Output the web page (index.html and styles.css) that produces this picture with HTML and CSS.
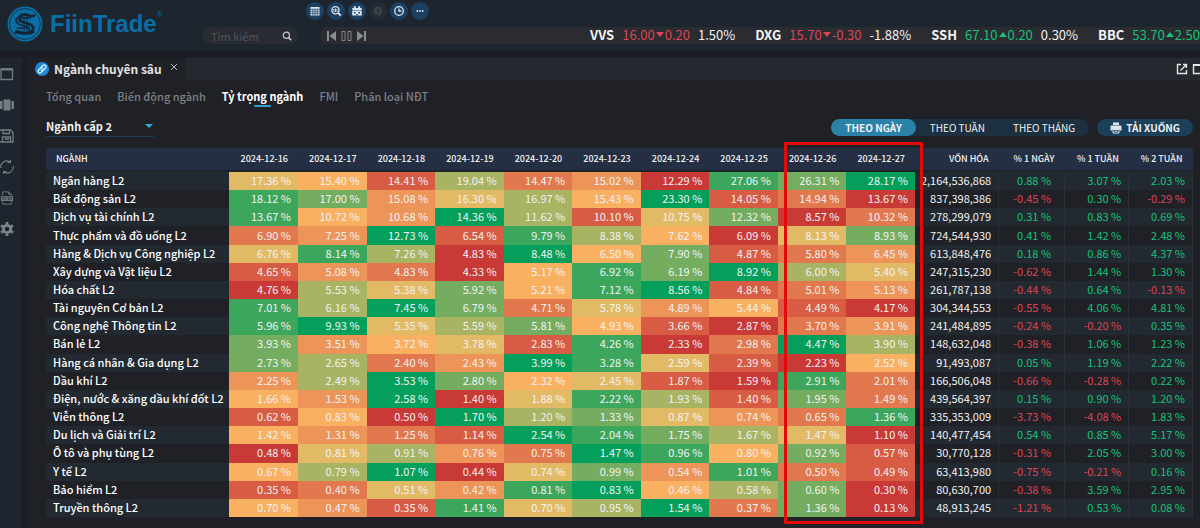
FILE: index.html
```
<!DOCTYPE html>
<html lang="vi">
<head>
<meta charset="utf-8">
<title>FiinTrade</title>
<link rel="stylesheet" href="styles.css">
</head>
<body>
<header class="topbar">
  <div class="brand">
    <svg class="brand-mark" viewBox="0 0 36 36" aria-hidden="true">
      <circle cx="18" cy="18" r="17.5" fill="#0a6fa6"/>
      <circle cx="18" cy="18" r="15.4" fill="none" stroke="#1b3347" stroke-width="1"/>
      <g fill="none" stroke="#152536" stroke-linecap="round">
        <path d="M27 9.500c-3 2.500-5-1-9-1-5 0-8 4-4.500 6.500 4 2.500 11 2 12.500 6 1.500 5-7 8-17 5" stroke-width="2.800"/>
        <path d="M9.500 12c-2 4 2 7 7 7.500s7 2 5 4.500M14 12h9M10 22h10M8 27c3-4 6-1 8 0s7 2 11-1" stroke-width="1.600"/>
        <path d="M17 9v17M20 9v16" stroke-width=".8"/>
      </g>
    </svg>
    <span class="brand-name">FiinTrade</span><span class="brand-reg">®</span>
  </div>
  <div class="top-tools">
    <nav class="quick" aria-label="Công cụ">
      <button aria-label="Bảng"><svg viewBox="0 0 18 18"><path fill="#dbe8f2" d="M4.500 5h9v8.500h-9z"/><path d="M4.500 7.200h9M4.500 9.300h9M4.500 11.400h9M6.800 7v6.500M9 7v6.500M11.300 7v6.500" stroke="#1c4160" stroke-width=".7"/></svg></button>
      <button aria-label="Tra cứu"><svg viewBox="0 0 18 18" fill="none" stroke="#dbe8f2"><circle cx="8.500" cy="8.300" r="3.600" stroke-width="1.300"/><path d="m11.200 11 2.500 2.600" stroke-width="1.800"/><path d="M7 7v3M8.500 6.500V10M10 7V10" stroke-width=".9"/></svg></button>
      <button aria-label="Lịch"><svg viewBox="0 0 18 18"><path fill="#dbe8f2" d="M4.300 6h9.400v2.500H4.300zM4.300 9h9.400v4.500H4.300zM5.800 4.300h2V6h-2zM10.200 4.300h2V6h-2z"/><path fill="#1c4160" d="M6 10h1.600v1.600H6zM10.300 10H12v1.600h-1.700zM8.300 12h1.400v1.500H8.300z"/></svg></button>
      <button class="off" aria-label="Cảnh báo"><svg viewBox="0 0 18 18"><circle cx="9" cy="9" r="4.500" fill="#3a3f48"/><path d="M9 6.500v5" stroke="#252b34"/></svg></button>
      <button aria-label="Thời gian"><svg viewBox="0 0 18 18" fill="none" stroke="#dbe8f2" stroke-width="1.300"><circle cx="9" cy="9" r="4.300"/><path d="M9 6.500V9h2.300"/></svg></button>
      <button aria-label="Thêm"><svg viewBox="0 0 18 18" fill="#dbe8f2"><circle cx="6.300" cy="9" r=".9"/><circle cx="9" cy="9" r=".9"/><circle cx="11.700" cy="9" r=".9"/></svg></button>
    </nav>
    <div class="market">
      <label class="search">
        <input type="text" placeholder="Tìm kiếm" aria-label="Tìm kiếm">
        <svg viewBox="0 0 10 10" fill="none" stroke="#c9ccd0"><circle cx="4.300" cy="4.300" r="3.100" stroke-width="1.200"/><path d="m6.600 6.600 2.500 2.500" stroke-width="1.500"/></svg>
      </label>
      <div class="ticker">
        <div class="player">
          <button aria-label="Trước"><svg viewBox="0 0 11 12"><path fill="#8a8d92" d="M1 1h2v10H1zM10 1v10L3.500 6z"/></svg></button>
          <button aria-label="Dừng"><svg viewBox="0 0 11 12"><path fill="none" stroke="#8a8d92" stroke-width=".9" d="M1 1.500h3v9H1zM7 1.500h3v9H7z"/></svg></button>
          <button aria-label="Sau"><svg viewBox="0 0 11 12"><path fill="#8a8d92" d="M8 1h2v10H8zM1 1v10l6.500-5z"/></svg></button>
        </div>
        <div class="quotes">
          <div class="quote"><b>VVS</b><span class="down">16.00<i></i>0.20</span><span>1.50%</span></div>
          <div class="quote"><b>DXG</b><span class="down">15.70<i></i>-0.30</span><span>-1.88%</span></div>
          <div class="quote"><b>SSH</b><span class="up">67.10<i></i>0.20</span><span>0.30%</span></div>
          <div class="quote"><b>BBC</b><span class="up">53.70<i></i>2.50</span></div>
        </div>
      </div>
    </div>
  </div>
</header>
<div class="workspace">
  <aside class="rail">
    <button aria-label="Cửa sổ"><svg viewBox="0 0 14 14"><path fill="none" stroke="#777c83" stroke-width="1.300" d="M1 2h11.500v10.500H1z"/><path stroke="#777c83" stroke-width="2" d="M1 2.500h11.500"/></svg></button>
    <button aria-label="Bố cục"><svg viewBox="0 0 14 14" fill="#777c83"><path d="M3.500 1.500h7v11h-7zM0 3h2.500v8H0zM11.500 3H14v8h-2.500z"/></svg></button>
    <button aria-label="Lưu"><svg viewBox="0 0 14 14" fill="none" stroke="#777c83" stroke-width="1.300"><path d="M-1 1h11.500L13 3.500V13H-1M3 1v3.500h6.500V1M2.500 13V8h8v5M5 10h4"/></svg></button>
    <button aria-label="Làm mới"><svg viewBox="0 0 14 14" fill="none" stroke="#777c83" stroke-width="1.100"><path d="M.8 8A6 6 0 0 1 10 2M13.200 6A6 6 0 0 1 4 12M7.500 2.500H10.500V0M6.500 11.500H3.500V14"/></svg></button>
    <button aria-label="Xuất XLSX"><svg viewBox="0 0 14 16"><path fill="none" stroke="#777c83" d="M2 5V1h7l3 3v2M2 12v3h10v-3M9 1v3h3"/><path fill="#777c83" d="M0 6h14v5.500H0z"/><path fill="none" stroke="#252b34" stroke-width=".8" d="m1.500 7 2 3M3.500 7l-2 3M5 7v3h1.500M9.500 7.200H8v1.500h1.500V10H8M11 7l1.500 3M12.500 7 11 10"/></svg></button>
    <button aria-label="Cài đặt"><svg viewBox="0 0 14 14"><circle cx="7" cy="7" r="3.700" fill="none" stroke="#7f848b" stroke-width="2.800"/><path stroke="#7f848b" stroke-width="2.700" d="M7 0v2.500M7 11.500V14M1 3.500l2.200 1.300M10.800 9.200 13 10.500M1 10.500l2.200-1.300M10.800 4.800 13 3.500"/></svg></button>
  </aside>
  <main class="panel">
    <div class="window-bar">
      <div class="window-tab">
        <svg class="link-icon" viewBox="0 0 14 14"><circle cx="7" cy="7" r="7" fill="#1d87dc"/><g fill="none" stroke="#e8f4ff" stroke-width="1.200" stroke-linecap="round"><path d="m6 5.400 1.900-1.900a1.600 1.600 0 0 1 2.600 2.500L8.500 8a1.500 1.500 0 0 1-2.300-.2"/><path d="M8 8.600 6.100 10.500A1.600 1.600 0 0 1 3.500 8l2-2a1.500 1.500 0 0 1 2.300.2"/></g></svg>
        <h1>Ngành chuyên sâu</h1>
        <button class="close" aria-label="Đóng"><svg viewBox="0 0 8 8"><path d="m1 1 6 6M7 1 1 7" stroke="#c8cacd" stroke-width=".9"/></svg></button>
      </div>
      <div class="window-actions">
        <button aria-label="Mở rộng"><svg viewBox="0 0 12 12" fill="none" stroke="#e5e5e6" stroke-width="1.400"><path d="M5 1.500H1.500v9h9V7M4.500 7.500 10 2M7 1.500h3.500V5"/></svg></button>
        <button aria-label="Phóng to"><svg viewBox="0 0 12 12" fill="none" stroke="#e5e5e6"><path stroke-width="1.400" d="M1.500 2h9v8.500h-9z"/><path stroke-width="2" d="M1 2h10"/></svg></button>
      </div>
    </div>
    <nav class="tabs">
      <a href="#">Tổng quan</a>
      <a href="#">Biến động ngành</a>
      <a href="#" class="current">Tỷ trọng ngành</a>
      <a href="#">FMI</a>
      <a href="#">Phân loại NĐT</a>
    </nav>
    <div class="controls">
      <div class="level"><select aria-label="Cấp ngành"><option>Ngành cấp 2</option></select></div>
      <div class="actions">
        <div class="period">
          <button class="on">THEO NGÀY</button><button>THEO TUẦN</button><button>THEO THÁNG</button>
        </div>
        <button class="download"><svg viewBox="0 0 12 12"><path fill="#dce6ee" d="M3 .5h6V3H3zM1.500 3.500h9a1 1 0 0 1 1 1v4H9.500V7h-7v1.500H.5v-4a1 1 0 0 1 1-1z"/><path fill="none" stroke="#dce6ee" d="M3 7.500h6v3.500H3zM4.500 9.200h3"/></svg>TẢI XUỐNG</button>
      </div>
    </div>
    <div class="sheet">
      <table>
        <colgroup>
          <col class="c-name"><col class="c-day" span="10"><col class="c-cap"><col class="c-d1"><col class="c-w1"><col class="c-w2">
        </colgroup>
        <thead><tr>
          <th class="name">NGÀNH</th>
          <th>2024-12-16</th><th>2024-12-17</th><th>2024-12-18</th><th>2024-12-19</th><th>2024-12-20</th>
          <th>2024-12-23</th><th>2024-12-24</th><th>2024-12-25</th><th>2024-12-26</th><th>2024-12-27</th>
          <th>VỐN HÓA</th><th>% 1 NGÀY</th><th>% 1 TUẦN</th><th>% 2 TUẦN</th>
        </tr></thead>
        <tbody id="rows"></tbody>
      </table>
      <div class="highlight"></div>
    </div>
  </main>
</div>
<script src="script.js"></script>
</body>
</html>
```
FILE: styles.css
```
* { box-sizing: border-box; }
body {
  margin: 0;
  min-height: 100vh;
  display: flex;
  flex-direction: column;
  background: #1a1d25;
  color: #f2f2f3;
  font: 11px/16px "Noto Sans CJK SC", "Noto Sans", sans-serif;
}
button, input, select { font: inherit; color: inherit; border: 0; padding: 0; background: none; }
svg { display: block; }

.topbar {
  display: flex;
  height: 51px;
  flex: none;
  background: #1d252f;
}
.brand {
  display: flex;
  align-items: center;
  width: 202px;
  flex: none;
  padding: 0 0 3px 7px;
  color: #0a6fa6;
  font-family: "Liberation Sans", sans-serif;
}
.brand-mark { width: 36px; height: 36px; }
.brand-name { margin-left: 7px; font-size: 24px; font-weight: 700; line-height: 30px; }
.brand-reg { align-self: flex-start; padding-top: 8px; font-size: 8px; line-height: 14px; }
.top-tools { flex: 1; min-width: 0; display: flex; flex-direction: column; gap: 7px; padding-top: 2px; }
.quick { display: flex; gap: 3px; padding-left: 104px; }
.quick button { width: 18px; height: 18px; border-radius: 50%; background: #1c4160; }
.quick .off { background: #252b34; }
.market { display: flex; gap: 22px; }
.search {
  display: flex;
  align-items: center;
  width: 96px;
  height: 17px;
  padding: 0 6px 0 9px;
  border-radius: 9px;
  background: #282b32;
}
.search input { flex: 1; min-width: 0; outline: 0; }
.search input::placeholder { color: #50545b; opacity: 1; }
.search svg { width: 10px; height: 10px; }
.ticker {
  flex: 1;
  min-width: 0;
  display: flex;
  align-items: center;
  height: 17px;
  padding-left: 6px;
  border-radius: 9px 0 0 9px;
  background: #2a2c32;
}
.player { display: flex; gap: 4px; width: 264px; flex: none; }
.player svg { width: 11px; height: 12px; }
.quotes { display: flex; gap: 20px; padding-bottom: 2px; font-size: 13px; white-space: nowrap; }
.quote { display: flex; gap: 8px; }
.quote i { display: inline-block; margin: 0 1px 3px; border: 4px solid transparent; }
.down { color: #dc4654; }
.up { color: #16c278; }
.down i { border-top: 5px solid; border-bottom: 0; }
.up i { border-bottom: 5px solid; border-top: 0; }

.workspace { flex: 1; display: flex; gap: 6px; padding-top: 7px; }
.rail {
  display: flex;
  flex-direction: column;
  gap: 17px;
  width: 22px;
  flex: none;
  padding-top: 9px;
  background: #1e252e;
}
.rail svg { width: 14px; height: 14px; }
.panel {
  flex: 1;
  min-width: 0;
  display: flex;
  flex-direction: column;
  background: #1f2127;
}
.window-bar { display: flex; justify-content: space-between; height: 22px; background: #26282f; overflow: hidden; }
.window-tab {
  display: flex;
  align-items: center;
  width: 157px;
  padding-left: 7px;
  background: #1f2127;
}
.link-icon { width: 14px; height: 14px; flex: none; }
h1 { margin: 0 0 0 5px; font-size: 12px; line-height: 20px; color: #e2e2e4; white-space: nowrap; }
.close { align-self: flex-start; margin: 5px 0 0 8px; }
.close svg { width: 8px; height: 8px; }
.window-actions { display: flex; align-items: center; gap: 4px; width: 24px; }
.window-actions svg { width: 12px; height: 12px; flex: none; }
.tabs { display: flex; gap: 16px; padding: 8px 18px 0; font-weight: 500; }
.tabs a {
  display: flex;
  flex-direction: column;
  align-items: center;
  color: #7d8085;
  text-decoration: none;
}
.tabs .current { color: #fff; font-weight: 700; }
.tabs a::after { content: ""; width: 17px; height: 2px; margin-top: 1px; border-radius: 1px; }
.tabs .current::after { background: #35a0cf; }
.controls {
  display: flex;
  justify-content: space-between;
  align-items: flex-start;
  padding: 10px 7px 11px 18px;
}
.level { position: relative; width: 108px; border-bottom: 1px solid #1c405a; }
.level select { display: block; width: 100%; height: 19px; padding-bottom: 2px; appearance: none; font-weight: 700; outline: 0; }
.level::after {
  content: "";
  position: absolute;
  right: 1px;
  top: 7px;
  border: 4px solid transparent;
  border-top: 4px solid #35a8dc;
  border-bottom: 0;
}
.actions { display: flex; gap: 8px; padding-top: 2px; font-size: 10px; }
.period { display: flex; border-radius: 9px; background: #1d303f; }
.period button { height: 17px; padding: 0 14px; border-radius: 9px; }
.period .on { background: #2b82a9; font-weight: 700; }
.download {
  display: flex;
  align-items: center;
  gap: 4px;
  height: 17px;
  padding: 0 13px;
  border-radius: 9px;
  background: #1c405a;
  font-weight: 700;
}
.download svg { width: 12px; height: 12px; }

.sheet { position: relative; flex: 1; display: grid; margin: 0 7px 11px 18px; }
table { width: 100%; height: 100%; table-layout: fixed; border-collapse: collapse; }
.c-name { width: 16%; }
.c-day { width: 5.98%; }
.c-cap { width: 7.3%; }
.c-d1 { width: 5.75%; }
.c-w1 { width: 5.6%; }
.c-w2 { width: 5.55%; }
th {
  height: 23px;
  padding: 0 10px 0 0;
  border-bottom: 2px solid #1e2329;
  background: #252f43;
  font-size: 9px;
  font-weight: 500;
  text-align: right;
  white-space: nowrap;
}
th.name { padding-left: 10px; text-align: left; }
td { padding: 0 7px 2px 0; line-height: 16px; text-align: right; white-space: nowrap; }
td.name { padding: 0 0 2px 7px; font-weight: 500; color: #fff; text-align: left; }
td.cap { direction: rtl; }
td.change { border-right: 1px solid #2a3036; }
td.first { padding-right: 13px; border-left: 1px solid #2a3036; }
tbody tr:nth-child(odd) { background: #222930; }
.h0 { background: #c93a37; }
.h1 { background: #d85b43; }
.h2 { background: #e2794e; }
.h3 { background: #ed9458; }
.h4 { background: #f9b061; }
.h5 { background: #e2ba66; }
.h6 { background: #a8b363; }
.h7 { background: #74ad60; }
.h8 { background: #3da65d; }
.h9 { background: #039f5b; }
.highlight {
  position: absolute;
  left: 64.3%;
  top: -6px;
  bottom: -7px;
  width: 12.2%;
  border: 3px solid #e40a0a;
}
```
FILE: script.js
```
// name | ten daily weights | market cap | change over 1 day, 1 week, 2 weeks
const sectors = `
Ngân hàng L2|17.36 15.40 14.41 19.04 14.47 15.02 12.29 27.06 26.31 28.17|2,164,536,868|0.88 3.07 2.03
Bất động sản L2|18.12 17.00 15.08 16.30 16.97 15.43 23.30 14.05 14.94 13.67|837,398,386|-0.45 0.30 -0.29
Dịch vụ tài chính L2|13.67 10.72 10.68 14.36 11.62 10.10 10.75 12.32 8.57 10.32|278,299,079|0.31 0.83 0.69
Thực phẩm và đồ uống L2|6.90 7.25 12.73 6.54 9.79 8.38 7.62 6.09 8.13 8.93|724,544,930|0.41 1.42 2.48
Hàng & Dịch vụ Công nghiệp L2|6.76 8.14 7.26 4.83 8.48 6.50 7.90 4.87 5.80 6.45|613,848,476|0.18 0.86 4.37
Xây dựng và Vật liệu L2|4.65 5.08 4.83 4.33 5.17 6.92 6.19 8.92 6.00 5.40|247,315,230|-0.62 1.44 1.30
Hóa chất L2|4.76 5.53 5.38 5.92 5.21 7.12 8.56 4.84 5.01 5.13|261,787,138|-0.44 0.64 -0.13
Tài nguyên Cơ bản L2|7.01 6.16 7.45 6.79 4.71 5.78 4.89 5.44 4.49 4.17|304,344,553|-0.55 4.06 4.81
Công nghệ Thông tin L2|5.96 9.93 5.35 5.59 5.81 4.93 3.66 2.87 3.70 3.91|241,484,895|-0.24 -0.20 0.35
Bán lẻ L2|3.93 3.51 3.72 3.78 2.83 4.26 2.33 2.98 4.47 3.90|148,632,048|-0.38 1.06 1.23
Hàng cá nhân & Gia dụng L2|2.73 2.65 2.40 2.43 3.99 3.28 2.59 2.39 2.23 2.52|91,493,087|0.05 1.19 2.22
Dầu khí L2|2.25 2.49 3.53 2.80 2.32 2.45 1.87 1.59 2.91 2.01|166,506,048|-0.66 -0.28 0.22
Điện, nước & xăng dầu khí đốt L2|1.66 1.53 2.58 1.40 1.88 2.22 1.93 1.40 1.95 1.49|439,564,397|0.15 0.90 1.20
Viễn thông L2|0.62 0.83 0.50 1.70 1.20 1.33 0.87 0.74 0.65 1.36|335,353,009|-3.73 -4.08 1.83
Du lịch và Giải trí L2|1.42 1.31 1.25 1.14 2.54 2.04 1.75 1.67 1.47 1.10|140,477,454|0.54 0.85 5.17
Ô tô và phụ tùng L2|0.48 0.81 0.91 0.76 0.75 1.47 0.96 0.80 0.92 0.57|30,770,128|-0.31 2.05 3.00
Y tế L2|0.67 0.79 1.07 0.44 0.74 0.99 0.54 1.01 0.50 0.49|63,413,980|-0.75 -0.21 0.16
Bảo hiểm L2|0.35 0.40 0.51 0.42 0.81 0.83 0.46 0.58 0.60 0.30|80,630,700|-0.38 3.59 2.95
Truyền thông L2|0.70 0.47 0.35 1.41 0.70 0.95 1.54 0.37 1.36 0.13|48,913,245|-1.21 0.53 0.08
`.trim().split("\n");

function cell(text, className) {
  const td = document.createElement("td");
  td.textContent = text;
  td.className = className;
  return td;
}

const body = document.getElementById("rows");
for (const line of sectors) {
  const [name, weightText, cap, changeText] = line.split("|");
  const weights = weightText.split(" ");
  // Each day is shaded by its rank inside the row, lowest red, highest green.
  const order = weights.map((_, i) => i).sort((a, b) => weights[a] - weights[b] || a - b);
  const row = document.createElement("tr");
  row.append(cell(name, "name"));
  weights.forEach((w, i) => row.append(cell(w + " %", "h" + order.indexOf(i))));
  row.append(cell(cap, "cap"));
  changeText.split(" ").forEach((c, i) => {
    row.append(cell(c + " %", "change " + (c < 0 ? "down" : "up") + (i ? "" : " first")));
  });
  body.append(row);
}
```
